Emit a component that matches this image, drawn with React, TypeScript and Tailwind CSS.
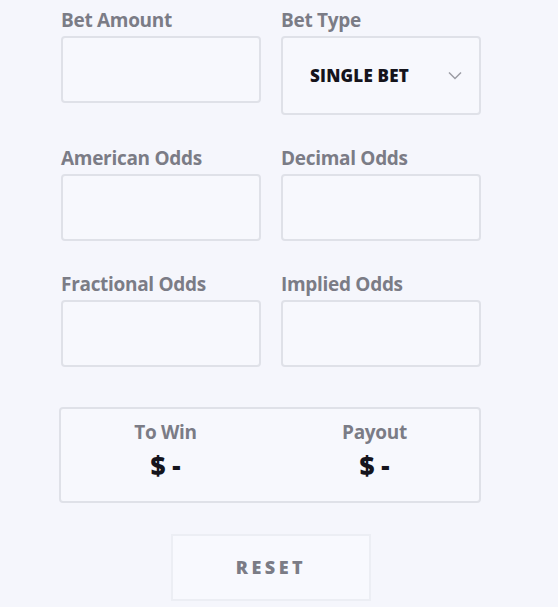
import React, { useState } from 'react';

const font = { fontFamily: '"Open Sans", "Noto Sans", sans-serif' };

function Field({ label, value, onChange }: { label: string; value: string; onChange: (v: string) => void }) {
  return (
    <label className="flex flex-col">
      <span className="h-6 leading-6 text-[19px] font-bold text-[#7b7c86] tracking-[-0.3px]">{label}</span>
      <input
        value={value}
        onChange={(e) => onChange(e.target.value)}
        className="mt-1 h-[67px] w-full rounded-[4px] border-2 border-[#dfe1e8] bg-[#f7f8fd] px-3 text-lg outline-none"
      />
    </label>
  );
}

export default function App() {
  const [amount, setAmount] = useState('');
  const [american, setAmerican] = useState('');
  const [decimal, setDecimal] = useState('');
  const [fractional, setFractional] = useState('');
  const [implied, setImplied] = useState('');

  const reset = () => {
    setAmount('');
    setAmerican('');
    setDecimal('');
    setFractional('');
    setImplied('');
  };

  return (
    <div className="min-h-[607px] w-full bg-[#f5f6fc] pt-2" style={font}>
      <div className="ml-[61px] w-[420px]">
        <div className="grid grid-cols-[200px_200px] gap-x-[20px] gap-y-[31px] items-start">
          <Field label="Bet Amount" value={amount} onChange={setAmount} />
          <div className="flex flex-col">
            <span className="h-6 leading-6 text-[19px] font-bold text-[#7b7c86] tracking-[-0.3px]">Bet Type</span>
            <button className="mt-1 h-[79px] w-full rounded-[4px] border-2 border-[#dfe1e8] bg-[#f7f8fd] flex items-center pl-[27px] pr-[17px]">
              <span className="flex-1 text-left text-[17px] font-extrabold text-[#15141c] tracking-[0.2px]">SINGLE BET</span>
              <svg width="14" height="9" viewBox="0 0 14 9" fill="none" stroke="#9b9ca4" strokeWidth="1.5">
                <path d="M1 1.5l6 6 6-6" />
              </svg>
            </button>
          </div>
          <Field label="American Odds" value={american} onChange={setAmerican} />
          <Field label="Decimal Odds" value={decimal} onChange={setDecimal} />
          <Field label="Fractional Odds" value={fractional} onChange={setFractional} />
          <Field label="Implied Odds" value={implied} onChange={setImplied} />
        </div>

        <div className="-ml-[2px] mt-[40px] h-[96px] w-[422px] rounded-[4px] border-2 border-[#dfe1e8] bg-[#f7f8fd] grid grid-cols-2 pt-[11px]">
          {['To Win', 'Payout'].map((t) => (
            <div key={t} className="flex flex-col items-center">
              <span className="text-[19px] leading-6 font-bold text-[#7b7c86] tracking-[-0.3px]">{t}</span>
              <span className="mt-[5px] text-[26px] leading-8 font-extrabold text-[#15141c]">$ -</span>
            </div>
          ))}
        </div>

        <div className="mt-[31px] flex justify-center">
          <button
            onClick={reset}
            className="h-[67px] w-[200px] border-2 border-[#eceef4] bg-[#f8f9fe] text-[18px] font-extrabold tracking-[3.5px] text-[#7b7c86]"
          >
            RESET
          </button>
        </div>
      </div>
    </div>
  );
}
